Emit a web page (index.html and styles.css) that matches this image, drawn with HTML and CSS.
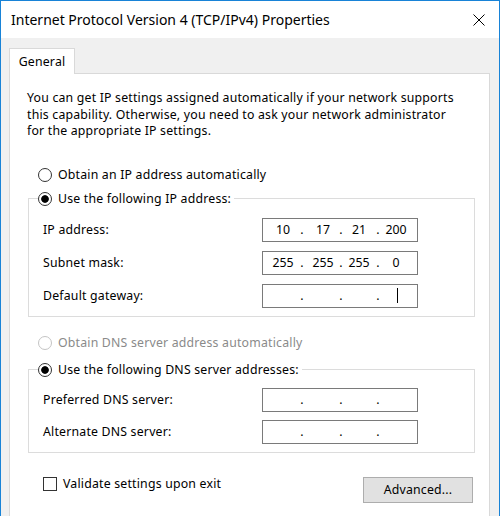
FILE: index.html
```html
<!DOCTYPE html>
<html>
<head>
<meta charset="utf-8">
<link rel="stylesheet" href="styles.css">
</head>
<body>
<div class="window">
  <div class="titlebar">
    <span class="title">Internet Protocol Version 4 (TCP/IPv4) Properties</span>
    <svg class="close" width="12" height="12" viewBox="0 0 12 12"><path d="M0.5 0.5 L11.5 11.5 M11.5 0.5 L0.5 11.5" stroke="#000" stroke-width="1" fill="none"/></svg>
  </div>
  <div class="content">
    <div class="tabs"><div class="tab">General</div></div>
    <div class="panel">
      <p class="intro">You can get IP settings assigned automatically if your network supports<br>this capability. Otherwise, you need to ask your network administrator<br>for the appropriate IP settings.</p>

      <div class="option obtain-ip"><span class="radio"></span><span>Obtain an IP address automatically</span></div>

      <fieldset class="group group-ip">
        <legend class="option"><span class="radio checked"></span><span>Use the following IP address:</span></legend>
        <div class="rows rows-ip">
          <div class="row">
            <span>IP address:</span>
            <div class="ipbox">
              <span class="f f1">10</span><span class="d d1">.</span><span class="f f2">17</span><span class="d d2">.</span><span class="f f3">21</span><span class="d d3">.</span><span class="f f4">200</span>
            </div>
          </div>
          <div class="row">
            <span>Subnet mask:</span>
            <div class="ipbox">
              <span class="f f1">255</span><span class="d d1">.</span><span class="f f2">255</span><span class="d d2">.</span><span class="f f3">255</span><span class="d d3">.</span><span class="f f4">0</span>
            </div>
          </div>
          <div class="row">
            <span>Default gateway:</span>
            <div class="ipbox">
              <span class="f f1"></span><span class="d d1">.</span><span class="f f2"></span><span class="d d2">.</span><span class="f f3"></span><span class="d d3">.</span><span class="f f4"><span class="caret"></span></span>
            </div>
          </div>
        </div>
      </fieldset>

      <div class="option obtain-dns disabled"><span class="radio"></span><span>Obtain DNS server address automatically</span></div>

      <fieldset class="group group-dns">
        <legend class="option"><span class="radio checked"></span><span>Use the following DNS server addresses:</span></legend>
        <div class="rows rows-dns">
          <div class="row">
            <span>Preferred DNS server:</span>
            <div class="ipbox">
              <span class="f f1"></span><span class="d d1">.</span><span class="f f2"></span><span class="d d2">.</span><span class="f f3"></span><span class="d d3">.</span><span class="f f4"></span>
            </div>
          </div>
          <div class="row">
            <span>Alternate DNS server:</span>
            <div class="ipbox">
              <span class="f f1"></span><span class="d d1">.</span><span class="f f2"></span><span class="d d2">.</span><span class="f f3"></span><span class="d d3">.</span><span class="f f4"></span>
            </div>
          </div>
        </div>
      </fieldset>

      <div class="footer">
        <div class="check"><span class="box"></span><span>Validate settings upon exit</span></div>
        <div class="button">Advanced...</div>
      </div>
    </div>
  </div>
</div>
</body>
</html>
```

FILE: styles.css
```css
html, body {
  margin: 0;
  padding: 0;
}
body {
  width: 500px;
  height: 516px;
  overflow: hidden;
  background: #f0f0f0;
  font-family: "Noto Sans", "Open Sans", sans-serif;
  font-size: 12.3px;
  letter-spacing: 0.2px;
  color: #000;
}
.window {
  width: 500px;
  height: 516px;
  box-sizing: border-box;
  border: 1px solid #1883d7;
  border-bottom: none;
  background: #f0f0f0;
  display: flex;
  flex-direction: column;
  overflow: hidden;
}
.titlebar {
  height: 37px;
  flex: none;
  background: #fff;
  display: flex;
  align-items: center;
  justify-content: space-between;
  padding: 0 14px 0 10px;
}
.title {
  font-size: 14px;
  letter-spacing: 0;
  line-height: 20px;
}
.close {
  display: block;
  margin-top: 1px;
}
.content {
  padding: 10px 9px 0 8px;
}
.tabs {
  display: flex;
}
.tab {
  position: relative;
  z-index: 1;
  width: 64px;
  height: 25px;
  box-sizing: content-box;
  border: 1px solid #d9d9d9;
  border-bottom: none;
  background: #fff;
  margin-bottom: -1px;
  display: flex;
  align-items: center;
  justify-content: center;
  line-height: 16px;
}
.panel {
  background: #fff;
  border: 1px solid #d9d9d9;
  padding: 16px 0 40px 0;
}
.intro {
  margin: 0 0 0 17px;
  line-height: 16.5px;
}
.option {
  display: flex;
  align-items: center;
  gap: 6px;
  height: 16px;
  line-height: 16px;
}
.obtain-ip {
  margin: 27px 0 0 28px;
}
.obtain-dns {
  margin: 18px 0 0 28px;
}
.radio {
  width: 14px;
  height: 14px;
  box-sizing: border-box;
  border: 1px solid #333;
  border-radius: 50%;
  background: #fff;
  flex: none;
}
.radio.checked {
  background: radial-gradient(circle, #000 0, #000 3.4px, #fff 4.2px);
}
.disabled {
  color: #8a8a8a;
}
.disabled .radio {
  border-color: #c4c4c4;
}
.group {
  margin: 8px 14px 0 18px;
  border: 1px solid #dcdcdc;
  padding: 0 0 8px 0;
  min-width: 0;
}
.group legend {
  margin-left: 9px;
  padding: 0 3px 0 0;
}
.group-dns {
  margin-top: 11px;
  padding-bottom: 8px;
}
.rows {
  display: flex;
  flex-direction: column;
  padding: 11px 0 0 14px;
}
.rows-ip {
  gap: 9px;
}
.rows-dns {
  gap: 8px;
  padding-top: 10px;
}
.row {
  display: grid;
  grid-template-columns: 219px 156px;
  align-items: center;
}
.ipbox {
  height: 24px;
  box-sizing: border-box;
  border: 1px solid #7a7a7a;
  background: #fff;
  display: grid;
  grid-template-columns: 30px 8px 34px 2px 34px 4px 32px;
  padding-left: 5px;
  align-items: center;
  letter-spacing: 0;
}
.f, .d {
  display: flex;
  justify-content: center;
  align-items: center;
  height: 22px;
  line-height: 16px;
}
.caret {
  width: 1px;
  height: 15px;
  background: #000;
  margin-left: 2px;
}
.footer {
  display: flex;
  justify-content: space-between;
  align-items: flex-start;
  margin-top: 24px;
  padding: 0 16px 0 33px;
}
.check {
  display: flex;
  align-items: center;
  gap: 6px;
  height: 16px;
  line-height: 16px;
  margin-top: -1px;
}
.box {
  width: 14px;
  height: 14px;
  box-sizing: border-box;
  border: 1px solid #333;
  background: #fff;
  flex: none;
}
.button {
  width: 110px;
  height: 26px;
  box-sizing: border-box;
  border: 1px solid #adadad;
  background: #e1e1e1;
  display: flex;
  align-items: center;
  justify-content: center;
  line-height: 16px;
}
```
